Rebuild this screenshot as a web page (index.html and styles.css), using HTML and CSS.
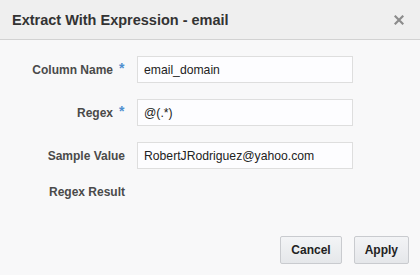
FILE: index.html
```html
<!DOCTYPE html>
<html>
<head>
<meta charset="utf-8">
<link rel="stylesheet" href="styles.css">
</head>
<body>
<div class="dialog">
  <div class="header">
    <span class="title">Extract With Expression - email</span>
    <button class="close" aria-label="Close">
      <svg width="10" height="10" viewBox="0 0 10 10"><path d="M1.5 1.5L8.5 8.5M8.5 1.5L1.5 8.5" stroke="#8c8c8c" stroke-width="2.2" stroke-linecap="square"/></svg>
    </button>
  </div>
  <div class="form">
    <label class="label req">Column Name<span class="star">*</span></label>
    <div class="field">email_domain</div>
    <label class="label req">Regex<span class="star">*</span></label>
    <div class="field">@(.*)</div>
    <label class="label">Sample Value</label>
    <div class="field">RobertJRodriguez@yahoo.com</div>
    <label class="label">Regex Result</label>
    <div class="empty"></div>
  </div>
  <div class="footer">
    <button class="btn">Cancel</button>
    <button class="btn">Apply</button>
  </div>
</div>
</body>
</html>
```
FILE: styles.css
```css
html, body {
  margin: 0;
  padding: 0;
}
body {
  background: #f8f8f9;
  font-family: "Liberation Sans", Arial, sans-serif;
}
.dialog {
  height: 275px;
  display: flex;
  flex-direction: column;
  background: #f8f8f9;
}
.header {
  background: #efefef;
  border-bottom: 1px solid #d2d2d2;
  display: flex;
  align-items: center;
  justify-content: space-between;
  padding: 0 16px 0 12px;
  box-sizing: border-box;
  height: 40px;
}
.title {
  font-size: 14.5px;
  font-weight: bold;
  color: #333;
  padding-top: 1px;
}
.close {
  border: 0;
  background: none;
  padding: 0;
  width: 10px;
  height: 10px;
  display: flex;
}
.form {
  display: grid;
  grid-template-columns: 125px 216px;
  column-gap: 12px;
  row-gap: 16px;
  padding-top: 16px;
  align-items: center;
}
.label {
  text-align: right;
  font-size: 12px;
  font-weight: bold;
  color: #4a4a4a;
  line-height: 14px;
}
.label.req {
  padding-right: 1px;
}
.star {
  display: inline-block;
  width: 5px;
  margin-left: 6px;
  color: #4f8fcf;
  font-size: 14px;
  vertical-align: 1px;
  line-height: 10px;
}
.field {
  height: 27px;
  box-sizing: border-box;
  border: 1px solid #dedede;
  background: #fdfdff;
  padding: 0 6px;
  font-size: 12.2px;
  color: #222;
  display: flex;
  align-items: center;
}
.empty {
  height: 14px;
}
.footer {
  margin-top: auto;
  display: flex;
  justify-content: flex-end;
  gap: 12px;
  padding: 0 11px 11px 0;
}
.btn {
  height: 28px;
  padding: 0 10px;
  font-family: "Liberation Sans", Arial, sans-serif;
  font-size: 12px;
  font-weight: bold;
  color: #222;
  border: 1px solid #c9cbcf;
  border-radius: 2px;
  background: linear-gradient(#f3f4f6, #e5e7ea);
}
```
